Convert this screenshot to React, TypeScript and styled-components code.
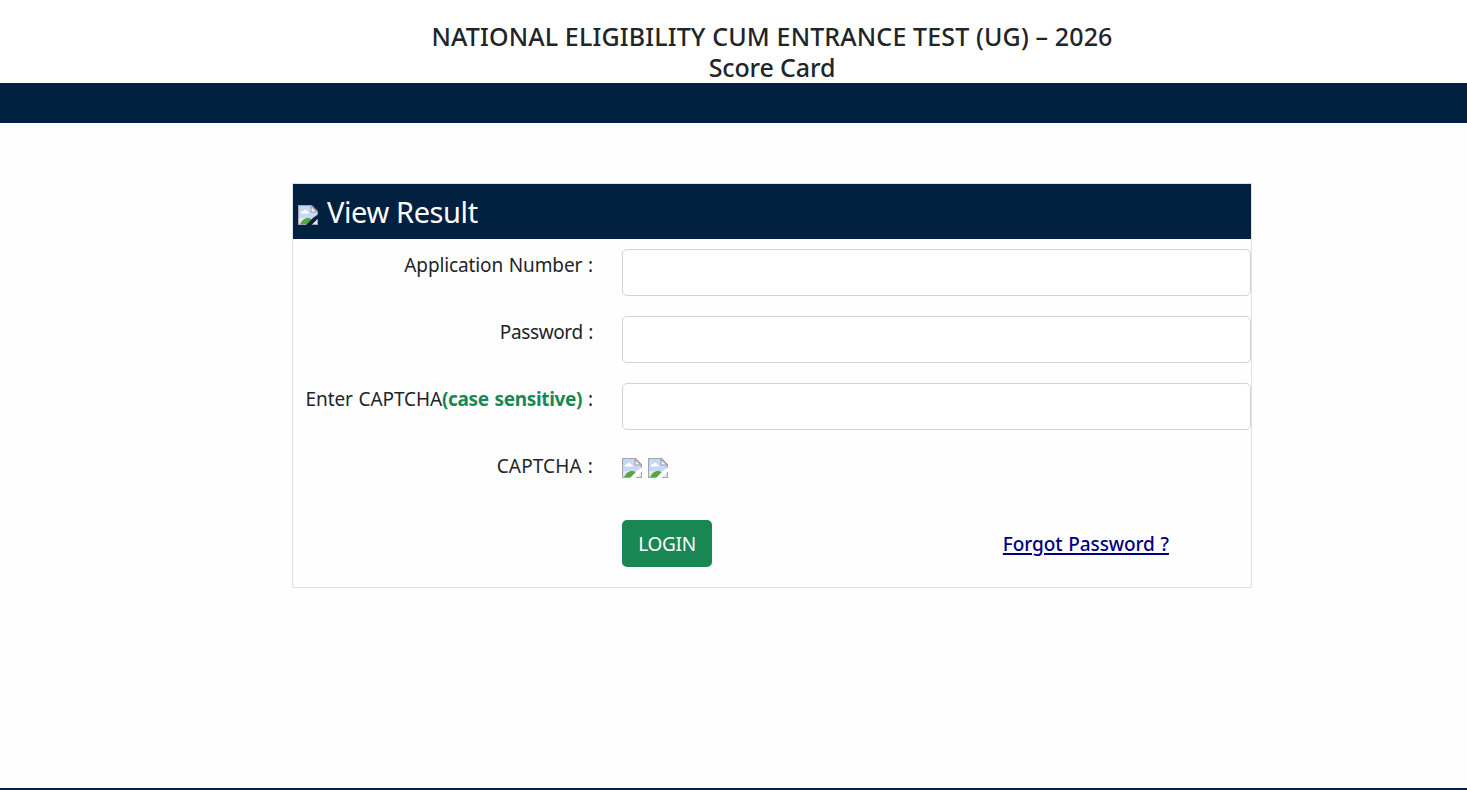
import styled, { createGlobalStyle } from "styled-components"

const GlobalStyle = createGlobalStyle`
  * {
    box-sizing: border-box;
  }
  body {
    margin: 0;
    background-color: #fefefe;
    color: #212529;
    font-family: "Segoe UI", "Noto Sans", "Open Sans", sans-serif;
    font-size: 19px;
    line-height: 30px;
  }
`

const BrokenImage = () => (
  <ImageIcon viewBox="0 0 20 20">
    <path d="M0.5 0.5H13.5L19.5 6.5V19.5H0.5Z" fill="#c8d7f5" />
    <path d="M1 13H19V19H1Z" fill="#e3eafa" />
    <path d="M2.6 8.4C2.6 6.8 3.8 6.2 5 6.4C5.4 4.4 8.2 4.2 8.8 6.2C10.2 6 11 7.2 10.6 8.4Z" fill="#fff" />
    <path d="M2 19.2C4 14 9 11.2 14 14L10 19.2Z" fill="#57a639" />
    <path d="M0.5 19.5V0.5H13.5L19.5 6.5V19.5Z" fill="none" stroke="#a3a3a8" strokeWidth="1.2" />
    <path d="M13 1V7H19Z" fill="#f4f4f6" stroke="#a3a3a8" strokeWidth="1.2" />
    <path className="tear" d="M8 20L15.5 12.5L20 9.5V13.5L13.5 20Z" />
  </ImageIcon>
)

const App = () => {
  return (
    <Page>
      <GlobalStyle />
      <Heading>
        <Title $spacing="0.14px">NATIONAL ELIGIBILITY CUM ENTRANCE TEST (UG) – 2026</Title>
        <Title $spacing="-0.15px">Score Card</Title>
      </Heading>
      <Navbar />
      <Card>
        <CardHeader>
          <BrokenImage />
          <CardTitle>View Result</CardTitle>
        </CardHeader>
        <Form>
          <Row>
            <Label htmlFor="application" $spacing="-0.13px">Application Number :</Label>
            <Input id="application" type="text" />
          </Row>
          <Row>
            <Label htmlFor="password" $spacing="-0.38px">Password :</Label>
            <Input id="password" type="password" />
          </Row>
          <Row>
            <Label htmlFor="captcha" $spacing="-0.1px">
              Enter CAPTCHA<Hint>(case sensitive)</Hint> :
            </Label>
            <Input id="captcha" type="text" />
          </Row>
          <Row>
            <Label as="span" $spacing="0.13px">CAPTCHA :</Label>
            <Captcha>
              <BrokenImage />
              <BrokenImage />
            </Captcha>
          </Row>
          <Actions>
            <LoginButton type="button">LOGIN</LoginButton>
            <ForgotLink href="#">Forgot Password ?</ForgotLink>
          </Actions>
        </Form>
      </Card>
      <Footer />
    </Page>
  )
}

const Page = styled.div`
  height: 100vh;

  display: flex;
  flex-direction: column;

  overflow: hidden;
`

const Heading = styled.header`
  height: 83px;
  padding: 21px 0 0 77px;

  display: flex;
  flex-direction: column;
  align-items: center;

  background-color: #fff;
`

const Title = styled.h1<{ $spacing: string }>`
  margin: 0;

  font-size: 25px;
  font-weight: 500;
  line-height: 31px;
  letter-spacing: ${({ $spacing }) => $spacing};
  white-space: nowrap;
`

const Navbar = styled.nav`
  height: 40px;
  flex-shrink: 0;

  background-color: #02203f;
`

const Card = styled.main`
  width: 960px;
  height: 405px;
  margin: 60px 0 0 292px;
  flex-shrink: 0;

  border: 1px solid #dee2e6;
`

const CardHeader = styled.div`
  --tear: #02203f;

  height: 55px;
  padding-left: 5px;

  display: flex;
  align-items: center;
  gap: 9px;

  background-color: #02203f;
  color: #fff;

  svg {
    margin-top: 7px;
  }
`

const CardTitle = styled.h2`
  margin: 0;

  font-size: 29px;
  font-weight: 400;
  line-height: 36px;
  letter-spacing: -0.4px;
`

const Form = styled.form`
  padding-top: 10px;

  display: flex;
  flex-direction: column;
  gap: 20px;
`

const Row = styled.div`
  height: 47px;

  display: grid;
  grid-template-columns: 300px 629px;
  column-gap: 29px;
`

const Label = styled.label<{ $spacing: string }>`
  padding-top: 1px;

  text-align: right;
  letter-spacing: ${({ $spacing }) => $spacing};
  word-spacing: 1px;
  white-space: nowrap;
`

const Hint = styled.b`
  color: #198754;
  font-weight: 700;
  letter-spacing: -0.33px;
`

const Input = styled.input`
  width: 100%;
  height: 47px;
  padding: 8px 15px;

  border: 1px solid #ced4da;
  border-radius: 5px;
  outline: none;

  background-color: #fff;
  font: inherit;
`

const Captcha = styled.div`
  --tear: #fefefe;

  padding-top: 8px;

  display: flex;
  gap: 6px;
`

const ImageIcon = styled.svg`
  width: 20px;
  height: 20px;
  flex-shrink: 0;

  .tear {
    fill: var(--tear);
  }
`

const Actions = styled.div`
  margin-top: 3px;
  padding: 0 82px 0 329px;

  display: flex;
  align-items: center;
  justify-content: space-between;
`

const LoginButton = styled.button`
  width: 90px;
  height: 47px;
  padding: 0;

  border: 0;
  border-radius: 5px;

  background-color: #198754;
  color: #fff;
  font: inherit;
  letter-spacing: -0.3px;
`

const ForgotLink = styled.a`
  color: #000080;
  font-weight: 500;
  letter-spacing: -0.1px;
  word-spacing: 1px;
  text-underline-offset: 2px;
  text-decoration-thickness: 2px;
`

const Footer = styled.footer`
  height: 2px;
  margin-top: auto;

  background-color: #02203f;
`

export default App
